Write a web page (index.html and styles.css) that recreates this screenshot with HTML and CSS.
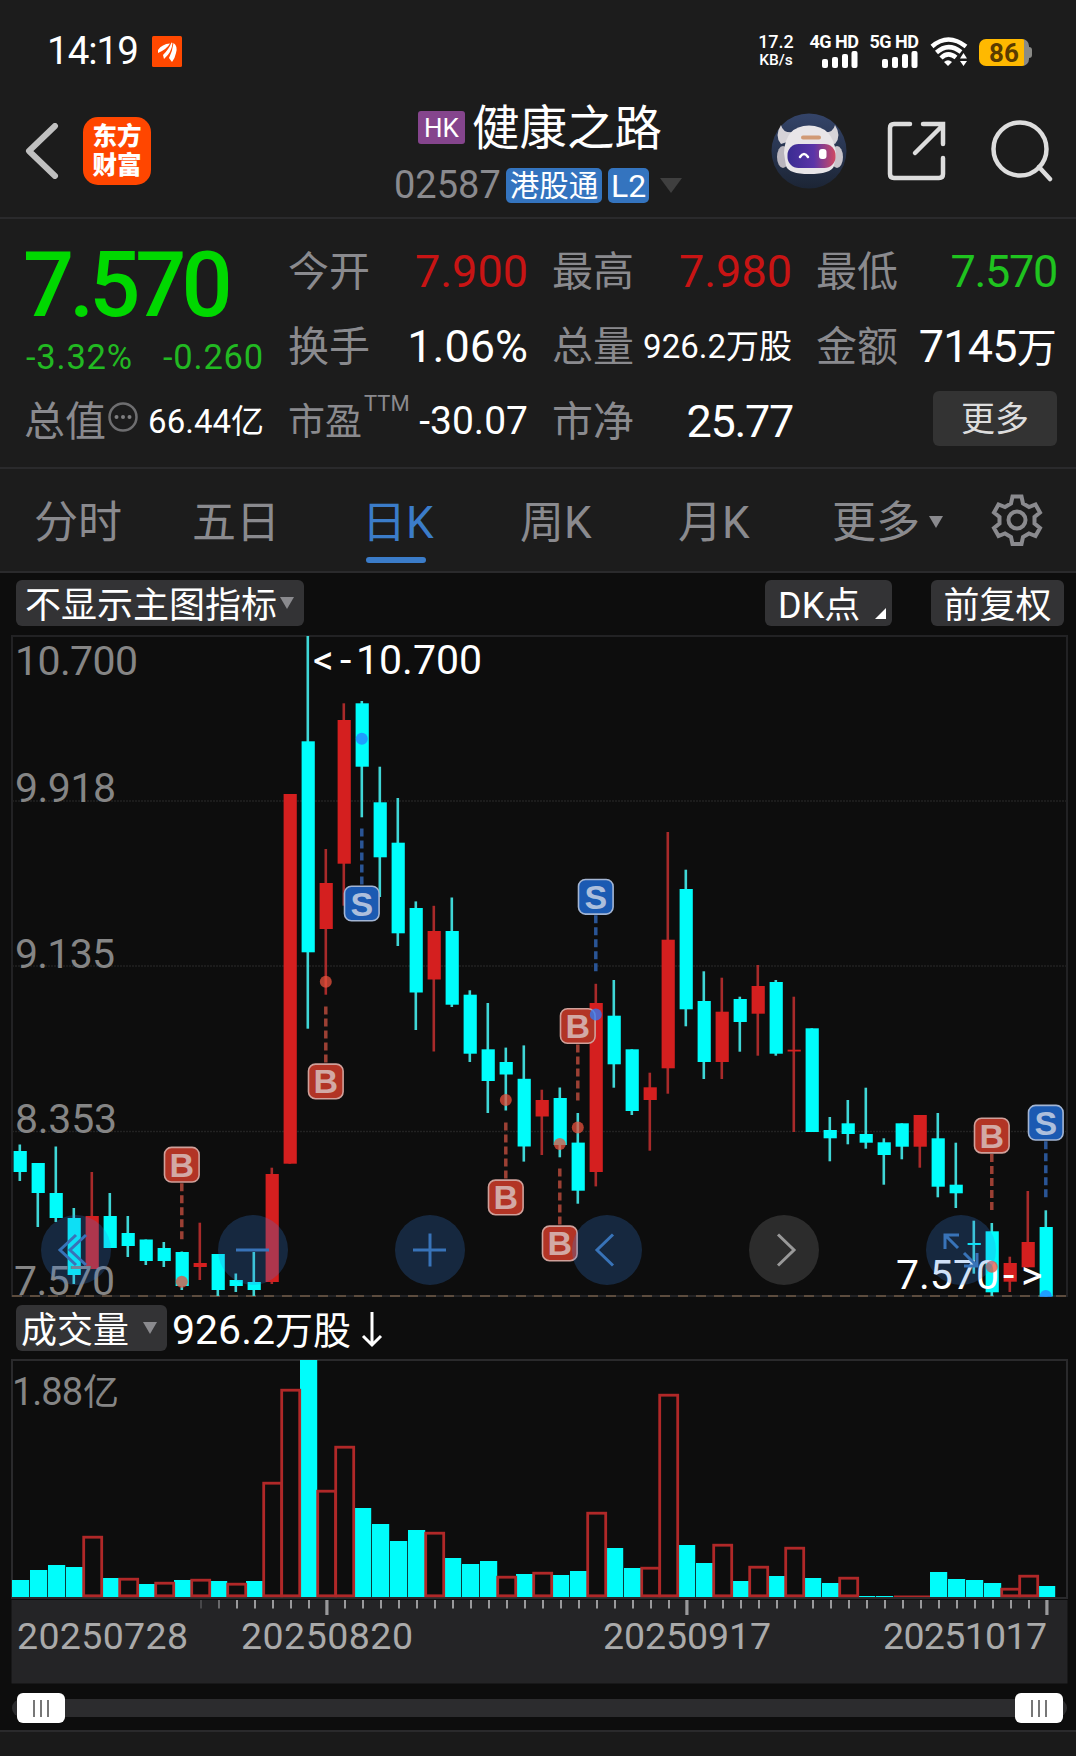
FILE: index.html
```html
<!DOCTYPE html>
<html lang="zh-CN">
<head>
    <meta charset="UTF-8" />
    <title>健康之路 02587</title>
    <link rel="stylesheet" href="styles.css">
</head>
<body>
    <div class="status">
        <span class="time">14:19</span>
        <svg class="notice" width="30" height="31" viewBox="0 0 30 31">
            <rect width="30" height="31" rx="1.5" fill="#ff4800"/>
            <path d="M6 14 Q10 8 18 7.500 Q15 13 6 17Z M11 19 Q17 13 19.500 6.500 L20.500 7 Q20 16 12 23Z M17 22 Q20.500 15 21.500 7 Q26 10 24 17 Q23 22 20 26Z" fill="#fff"/>
        </svg>
        <div class="status-right">
            <div class="speed"><b>17.2</b><i>KB/s</i></div>
            <div class="net">
                <span>4G HD</span>
                <svg width="36" height="17" viewBox="0 0 36 17" fill="#fff"><rect x="0" y="8" width="6" height="9" rx="2"/><rect x="10" y="6" width="6" height="11" rx="2"/><rect x="20" y="3" width="6" height="14" rx="2"/><rect x="29.500" y="0" width="6" height="17" rx="2"/></svg>
            </div>
            <div class="net">
                <span>5G HD</span>
                <svg width="36" height="17" viewBox="0 0 36 17" fill="#fff"><rect x="0" y="8" width="6" height="9" rx="2"/><rect x="10" y="6" width="6" height="11" rx="2"/><rect x="20" y="3" width="6" height="14" rx="2"/><rect x="29.500" y="0" width="6" height="17" rx="2"/></svg>
            </div>
            <svg class="wifi" width="38" height="30" viewBox="0 0 38 30">
                <g fill="none" stroke="#fff" stroke-width="4.500">
                    <path d="M2 9.500 Q18 -4.500 36 9.500"/>
                    <path d="M6.500 15.500 Q18 5 31 15"/>
                    <path d="M11 21 Q18 14 26 20.500"/>
                </g>
                <path d="M14 25 Q18 21.500 22 25 L18 29Z" fill="#fff"/>
                <path d="M30 21.500 L33.500 16 L37 21.500Z M30 24 L33.500 29 L37 24Z" fill="#fff"/>
            </svg>
            <div class="battery">86</div>
        </div>
    </div>

    <div class="header">
        <svg class="back" width="34" height="56" viewBox="0 0 34 56"><path d="M30 3 L4 28 L30 53" fill="none" stroke="#c0c0c0" stroke-width="6" stroke-linecap="round" stroke-linejoin="round"/></svg>
        <div class="logo">东方<br>财富</div>
        <div class="name">
            <div class="name-top"><span class="hk">HK</span><h1>健康之路</h1></div>
            <div class="name-sub"><span class="code">02587</span><span class="tag">港股通</span><span class="tag tag-l2">L2</span><em class="tri"></em></div>
        </div>
        <svg class="robot" width="76" height="78" viewBox="0 0 76 78">
            <defs>
                <linearGradient id="face"><stop offset="0" stop-color="#3a2c92"/><stop offset=".55" stop-color="#5b35a8"/><stop offset="1" stop-color="#d04a62"/></linearGradient>
                <linearGradient id="disc" x2="0" y2="1"><stop offset="0" stop-color="#344469"/><stop offset="1" stop-color="#1c2535"/></linearGradient>
            </defs>
            <ellipse cx="38" cy="38" rx="37.500" ry="37.500" fill="url(#disc)"/>
            <path d="M10 12 Q3 23 10 31 L22 27 L24 19 Q12 21 10 12Z M64 12 Q71 23 64 31 L52 27 L50 19 Q62 21 64 12Z" fill="#d6d3d8"/>
            <ellipse cx="12" cy="44" rx="6" ry="11" fill="#b9b5bd"/><ellipse cx="66" cy="44" rx="6" ry="11" fill="#c9c5cb"/>
            <path d="M13 40 Q14 13 38 12.500 Q62 13 65 40 L63 53 Q60 61 38 61 Q18 61 15 53Z" fill="#e8e5e8"/>
            <rect x="16.500" y="31" width="48" height="24" rx="11" fill="url(#face)"/>
            <path d="M29 44 Q33 38 37 44" stroke="#fff" stroke-width="2.500" fill="none" stroke-linecap="round"/>
            <rect x="48" y="36" width="7.500" height="10" rx="3" fill="#fff"/>
            <rect x="30" y="22.500" width="20" height="4" rx="2" fill="#d19a76"/>
        </svg>
        <svg class="share" width="60" height="62" viewBox="0 0 60 62"><path d="M23 4 H7 Q3 4 3 8 V54 Q3 58 7 58 H52 Q56 58 56 54 V38 M36 4 H56 V24 M55 6 L28 33" fill="none" stroke="#ddd" stroke-width="4.500" stroke-linecap="round"/></svg>
        <svg class="search" width="62" height="64" viewBox="0 0 62 64"><circle cx="29" cy="30" r="26.500" fill="none" stroke="#ddd" stroke-width="4.500"/><path d="M48 48 L59 60" stroke="#ddd" stroke-width="4.500" stroke-linecap="round"/></svg>
    </div>

    <div class="quote">
        <div class="col col-price">
            <div class="price">7.570</div>
            <div class="change"><span>-3.32%</span><span>-0.260</span></div>
            <div class="item cap"><label>总值</label>
                <svg width="30" height="30" viewBox="0 0 30 30"><circle cx="15" cy="15" r="13.500" fill="none" stroke="#6e6e70" stroke-width="2.500"/><g fill="#7e7e80"><circle cx="8.500" cy="15" r="2"/><circle cx="15" cy="15" r="2"/><circle cx="21.500" cy="15" r="2"/></g></svg>
                <span class="val small">66.44亿</span></div>
        </div>
        <div class="col">
            <div class="item"><label>今开</label><span class="val red">7.900</span></div>
            <div class="item"><label>换手</label><span class="val">1.06%</span></div>
            <div class="item"><label class="pe">市盈<sup>TTM</sup></label><span class="val mid">-30.07</span></div>
        </div>
        <div class="col">
            <div class="item"><label>最高</label><span class="val red">7.980</span></div>
            <div class="item"><label>总量</label><span class="val small">926.2万股</span></div>
            <div class="item"><label>市净</label><span class="val tight">25.77</span></div>
        </div>
        <div class="col">
            <div class="item"><label>最低</label><span class="val green tight">7.570</span></div>
            <div class="item"><label>金额</label><span class="val amount">7145<u>万</u></span></div>
            <div class="item end"><button class="more">更多</button></div>
        </div>
    </div>

    <div class="tabs">
        <span>分时</span>
        <span>五日</span>
        <span class="on">日K</span>
        <span>周K</span>
        <span>月K</span>
        <span>更多<em class="tri"></em></span>
        <svg class="gear" width="54" height="54" viewBox="-27 -27 54 54" fill="none" stroke="#8a8a8e" stroke-width="4">
            <path d="M-4.500 -23.500 H4.500 L6 -16.500 L12 -13 L18.500 -15.500 L23 -7.500 L17.500 -3 V3.500 L23 8 L18.500 16 L12 13.500 L6 17 L4.500 24 H-4.500 L-6 17 L-12 13.500 L-18.500 16 L-23 8 L-17.500 3.500 V-3 L-23 -7.500 L-18.500 -15.500 L-12 -13 L-6 -16.500Z"/>
            <circle r="8.500"/>
        </svg>
    </div>

    <div class="toolbar">
        <span class="pill main"><b>不显示主图指标</b><em class="tri"></em></span>
        <span class="pill dk"><b>DK点</b><em class="corner"></em></span>
        <span class="pill fq"><b>前复权</b></span>
    </div>

    <div class="kline">
        <svg id="kchart" width="1076" height="668" viewBox="0 632 1076 668"></svg>
        <div class="ctrls">
            <span class="ctrl"><svg viewBox="0 0 70 70"><path d="M35 20 L19 35 L35 50 M45 20 L29 35 L45 50"/></svg></span>
            <span class="ctrl"><svg viewBox="0 0 70 70"><path d="M18 35 H51"/></svg></span>
            <span class="ctrl"><svg viewBox="0 0 70 70"><path d="M18 35 H51 M35 18.500 V51.500"/></svg></span>
            <span class="ctrl"><svg viewBox="0 0 70 70"><path d="M41 19.500 L25 35 L41 50.500"/></svg></span>
            <span class="ctrl gray"><svg viewBox="0 0 70 70"><path d="M29 19.500 L45 35 L29 50.500"/></svg></span>
            <span class="ctrl"><svg viewBox="0 0 70 70"><path d="M33 20 H19 V34 M19 20 L32 33 M51 38 V51 H38 M51 51 L38 38"/></svg></span>
        </div>
    </div>

    <div class="volbar">
        <span class="pill vol"><b>成交量</b><em class="tri"></em></span>
        <span class="volnum">926.2<u>万股</u></span>
        <svg width="22" height="38" viewBox="0 0 22 38"><path d="M11 2 V34 M2 26 L11 35 L20 26" fill="none" stroke="#fff" stroke-width="3"/></svg>
    </div>
    <svg id="vchart" width="1076" height="330" viewBox="0 1356 1076 330"></svg>

    <div class="slider">
        <span class="handle"><i></i><i></i><i></i></span>
        <span class="handle"><i></i><i></i><i></i></span>
    </div>
    <div class="footer"></div>

    <script>
        // 每根: 涨跌(1红 0青), 最高, 实体上, 实体下, 最低
        var list = [
            [0,1144.5,1151,1172,1181],[0,1163,1163,1193,1227],[0,1146.5,1193,1218,1222],[0,1208,1218,1275,1284],
            [1,1172,1216,1269,1269],[0,1193,1216,1248,1248],[0,1216,1233,1246,1257],[0,1239.5,1239.5,1261,1265],
            [0,1242,1248,1261,1267],[0,1251.5,1252,1286,1290],[1,1222.7,1263,1267,1280],[0,1254,1254,1290,1296],
            [0,1273.5,1280,1286,1292],[0,1252,1282,1290,1296],[1,1167.7,1174,1282,1284],[1,794,794,1163.7,1163.7],
            [0,636,741.3,952.3,1028.7],[1,849,883,929,994.7],[1,703.3,720,863.7,905.7],[0,701,703.3,766.7,817.3],
            [0,766.7,802.3,857.3,897],[0,798,842.7,933.3,946],[0,901.4,908,992.5,1030],[1,905.8,931,979.5,1051.5],
            [0,897.5,931,1004.7,1007],[0,990.3,994.7,1053.7,1062],[0,1003,1049.3,1081,1113],[0,1047.6,1062,1074.5,1110.5],
            [0,1045.4,1078.8,1146.5,1161.6],[1,1089.7,1100,1116.5,1155],[0,1087.5,1098,1145,1157.3],[0,1113,1142.6,1190.7,1203.7],
            [1,983.8,1003,1172,1186.4],[0,980,1015.7,1064.3,1087.7],[0,1049.3,1049.3,1111,1115],[1,1072.7,1087.3,1100,1150.7],
            [1,832,939.7,1068.3,1093.7],[0,869.7,889,1009.3,1026.3],[0,971.3,1001,1062,1079],[1,977.7,1011.7,1062,1079],
            [0,996.7,999,1022,1051.7],[1,965,986,1013.7,1055.7],[0,980,982,1053.7,1055.7],[1,996.7,1049.7,1051.5,1132],
            [0,1028.3,1028.3,1132,1132],[0,1117,1130,1138.3,1161.3],[0,1100,1123.3,1134,1144.3],[0,1087.7,1134,1142.7,1148.7],
            [0,1138.3,1142.3,1155,1184.7],[0,1123.3,1123.3,1146.7,1159.3],[1,1115,1115,1146.7,1167.7],[0,1113,1138.3,1186.7,1197.3],
            [0,1142.7,1184.7,1193.3,1208],[0,1220.7,1243,1245,1273.7],[0,1223,1231.3,1292.3,1296],[1,1256.7,1263,1281.7,1292],
            [1,1191,1242,1267.3,1267.3],[0,1210.3,1227,1296.5,1296.5]
        ];
        var vols = [17,27,32,30,61,19,19,13,15,17,18,16,14,16,115,208,237,107,151,89,73,56,67,65,39,33,36,21,23,25,22,26,85,49,29,30,203,52,34,53,16,31,21,50,19,14,20,1,1,1,1,25,18,17,14,9,22,11];
        // 成交量里红框的序号
        var volRed = [4,6,8,10,12,14,15,17,18,23,27,29,32,35,36,39,41,43,46,49,50,55,56];
        // 买卖点: 序号, 类型, 圆点y, 标签中心y
        var marks = [
            [9,'B',1281.7,1164.7],[17,'B',981.7,1081.4],[19,'S',738.7,903.5],[27,'B',1100,1197.4],[30,'B',1144,1243.4],
            [31,'B',1127.4,1026],[32,'S',1014.6,896.8],[54,'B',1266.7,1135.6],[57,'S',1296,1122.7]
        ];
        var cyan = '#00fdfb', red = '#d41f1f';

        function text(x, y, w, size, color, s){
            return '<text x="'+x+'" y="'+y+'" textLength="'+w+'" font-size="'+size+'" fill="'+color+'">'+s+'</text>';
        }

        var k = '<rect x="12" y="636" width="1055" height="660" fill="none" stroke="#222224" stroke-width="2"/>';
        [801,966,1131.5].forEach(function(y){
            k += '<path d="M12 '+y+' H1067" stroke="#222" stroke-width="1.500" stroke-dasharray="2 1"/>';
        });
        k += '<path d="M12 1296 H1067" stroke="#5c4c3e" stroke-width="1.800" stroke-dasharray="10 8"/>';
        for(var i=0;i<list.length;i++){
            var c = 19.8 + i*18, d = list[i], color = d[0] ? red : cyan;
            k += '<rect x="'+(c-1.3)+'" y="'+d[1]+'" width="2.6" height="'+(d[4]-d[1])+'" fill="'+(d[0] ? '#a82a2a' : '#3fd6d6')+'"/>';
            k += '<rect x="'+(c-6.2)+'" y="'+d[2]+'" width="13.200" height="'+(d[3]-d[2])+'" fill="'+color+'"/>';
        }
        k += text(15,675,123,41,'#858585','10.700') + text(15,802,101,41,'#858585','9.918') + text(15,968,100,41,'#858585','9.135')
           + text(15,1133,102,41,'#858585','8.353') + text(14,1294.5,101,41,'#858585','7.570');
        k += '<text y="673.500" font-size="41" fill="#fff"><tspan x="313">&lt;</tspan><tspan x="340">-</tspan><tspan x="356">10.700</tspan></text>';
        k += '<text y="1289" font-size="41" fill="#fff"><tspan x="896">7.570</tspan><tspan x="1003">-</tspan><tspan x="1021">&gt;</tspan></text>';
        marks.forEach(function(m){
            var x = 19.8 + m[0]*18, buy = m[1]=='B', y = m[3];
            var up = m[2] < y;
            var y1 = up ? y-75 : y+18.5, y2 = up ? y-18 : y+75;
            k += '<path d="M'+x+' '+y1+' V'+y2+'" stroke="'+(buy ? '#9c4034' : '#2a5596')+'" stroke-width="3.500" stroke-dasharray="8 4"/>';
            k += '<circle cx="'+x+'" cy="'+m[2]+'" r="6" fill="'+(buy ? '#e8503c' : '#2a7dff')+'" fill-opacity=".75" clip-path="url(#box)"/>';
            k += '<rect x="'+(x-17.3)+'" y="'+(y-17.3)+'" width="34.600" height="34.600" rx="7" fill="'+(buy ? '#b23425' : '#1b5ab2')+'" stroke="'+(buy ? '#cfa09a' : '#a3b5d3')+'" stroke-width="1.600"/>';
            k += '<text class="mark" x="'+x+'" y="'+(y+12)+'" fill="'+(buy ? '#d2a9a5' : '#adbfdc')+'">'+m[1]+'</text>';
        });
        k = '<clipPath id="box"><rect x="12" y="636" width="1055" height="661"/></clipPath>' + k;
        document.getElementById('kchart').innerHTML = k;

        var v = '<rect x="12" y="1360" width="1055" height="238" fill="none" stroke="#2a2a2c" stroke-width="2"/>';
        v += '<rect x="11.500" y="1600" width="1056" height="83.500" fill="#242426"/>';
        v += text(12,1404.5,71,38,'#858585','1.88') + text(83,1404.5,36,36,'#858585','亿');
        for(var i=0;i<vols.length;i++){
            var x = 12 + i*18, h = vols[i];
            if(volRed.indexOf(i) < 0){
                v += '<rect x="'+x+'" y="'+(1597-h)+'" width="17.200" height="'+h+'" fill="'+cyan+'"/>';
            }
        }
        volRed.forEach(function(i){
            var x = 12 + i*18, h = vols[i];
            if(h < 3){
                v += '<rect x="'+x+'" y="1595.500" width="18" height="1.500" fill="#b02828"/>';
            } else {
                v += '<rect x="'+(x-0.3)+'" y="'+(1598.2-h)+'" width="18" height="'+(h-2.4)+'" fill="#0d0d0d" stroke="#b02828" stroke-width="2.800"/>';
            }
        });
        for(var i=10;i<58;i++){
            var big = i==17 || i==37 || i==57;
            var o = i==10 ? .3 : i==11 ? .6 : 1;
            v += '<rect x="'+(12+i*18+8-(big ? .7 : 0))+'" y="1600" width="'+(big ? 3.2 : 2)+'" height="'+(big ? 15 : 8.5)+'" fill="#99999b" opacity="'+o+'"/>';
        }
        v += text(17,1649,171,37.5,'#aaa','20250728') + text(241,1649,172,37.5,'#aaa','20250820')
           + text(603,1649,168,37.5,'#aaa','20250917') + text(883,1649,164,37.5,'#aaa','20251017');
        document.getElementById('vchart').innerHTML = v;
    </script>
</body>
</html>
```

FILE: styles.css
```css
*{
    margin: 0;
    padding: 0;
    box-sizing: border-box;
}
body{
    width: 1076px;
    height: 1756px;
    overflow: hidden;
    background: #0d0d0d;
    color: #fff;
    font-family: Roboto,'Noto Sans CJK SC',sans-serif;
    line-height: 1;
}
svg{
    display: block;
    flex: none;
}
i,em{
    font-style: normal;
}
u{
    text-decoration: none;
}
span,label,h1{
    white-space: nowrap;
}
.tri{
    display: inline-block;
    border: 7px solid transparent;
    border-top: 12px solid #8a8a8e;
    border-bottom: 0;
}

/* 状态栏 */
.status{
    height: 102px;
    padding: 0 47px 0 47px;
    background: #1c1c1c;
    display: flex;
    align-items: center;
}
.time{
    font-size: 38.500px;
    letter-spacing: -1px;
    width: 105px;
    padding-top: 1px;
}
.status-right{
    margin-left: auto;
    display: flex;
    align-items: center;
}
.speed{
    width: 38px;
    margin-right: 14px;
    text-align: center;
}
.speed b,.speed i{
    display: block;
    font-weight: 500;
    line-height: 1.150;
}
.speed b{
    font-size: 18px;
}
.speed i{
    font-size: 15.500px;
}
.net{
    width: 49px;
    margin-right: 11px;
    display: flex;
    flex-direction: column;
    align-items: flex-end;
}
.net span{
    font-size: 18px;
    line-height: 16px;
    font-weight: 700;
    letter-spacing: -.5px;
    margin-right: -.5px;
}
.net svg{
    margin-top: 1px;
}
.wifi{
    margin: 2px 11px 0 1px;
}
.battery{
    width: 50px;
    height: 27px;
    margin-top: 2px;
    border-radius: 7px;
    background: linear-gradient(90deg,#ffb900 45px,#8a8a86 45px);
    color: #5a3b00;
    font-size: 26px;
    font-weight: 700;
    line-height: 28px;
    text-align: center;
    position: relative;
}
.battery:after{
    content: "";
    position: absolute;
    right: -3px;
    top: 8px;
    width: 4px;
    height: 11px;
    border-radius: 0 3px 3px 0;
    background: #8a8a86;
}

/* 标题 */
.header{
    height: 117px;
    background: #1c1c1c;
    border-bottom: 2px solid #2a2a2c;
    display: flex;
    align-items: flex-start;
}
.back{
    margin: 21px 0 0 25px;
}
.logo{
    width: 68px;
    height: 68px;
    margin: 15px 0 0 24px;
    border-radius: 15px;
    background: #ff4600;
    font-size: 24.500px;
    line-height: 29px;
    padding-top: 5px;
    text-align: center;
    font-weight: 900;
}
.name{
    width: 300px;
    margin-left: 243px;
}
.name-top,.name-sub{
    display: flex;
    align-items: center;
}
.name-top{
    height: 50px;
    padding-left: 24px;
}
.hk{
    width: 47px;
    height: 33px;
    border-radius: 3px;
    background: #85458d;
    font-size: 26px;
    line-height: 34px;
    text-align: center;
}
h1{
    margin-left: 7px;
    padding-top: 6px;
    font-size: 47.500px;
    font-weight: 400;
}
.name-sub{
    height: 36px;
    margin-top: 15px;
}
.code{
    width: 112px;
    font-size: 38px;
    color: #8a8a8e;
}
.tag{
    height: 35px;
    width: 96px;
    border-radius: 5px;
    background: #3474bf;
    font-size: 29.500px;
    line-height: 36px;
    text-align: center;
}
.tag-l2{
    width: 41px;
    margin-left: 6px;
    font-size: 32px;
}
.name-sub .tri{
    margin-left: 11px;
    border-width: 15px 11px 0;
    border-top-color: #3f3f3f;
}
.robot{
    margin: 11px 0 0 77px;
}
.share{
    margin: 18px 0 0 40px;
}
.search{
    margin: 17px 0 0 44px;
}

/* 行情 */
.quote{
    height: 250px;
    padding: 14px 22px 0 26px;
    background: #1c1c1c;
    border-bottom: 2px solid #2a2a2c;
    display: flex;
    gap: 26px;
}
.col{
    width: 238px;
    flex: none;
}
.item{
    height: 75px;
    display: flex;
    align-items: center;
    justify-content: space-between;
}
.item label{
    margin-left: -2px;
    padding-top: 4px;
    font-size: 41px;
    color: #8a8a8e;
}
.item .pe{
    font-size: 37px;
    position: relative;
}
.pe sup{
    position: absolute;
    left: 76px;
    top: -8px;
    font-size: 22px;
    line-height: 23px;
}
.val{
    padding-top: 2px;
    font-size: 45px;
}
.val u{
    font-size: 40px;
}
.val.tight{
    letter-spacing: -1.300px;
    margin-right: -1px;
}
.val.amount{
    letter-spacing: -.8px;
}
.val.mid{
    font-size: 39px;
}
.val.small{
    font-size: 33px;
}
.red{
    color: #c81414;
}
.green{
    color: #1fc31f;
}
.price{
    height: 104px;
    margin-left: -3px;
    font-size: 90px;
    line-height: 106px;
    font-weight: 500;
    letter-spacing: -5px;
    color: #00d800;
}
.change{
    height: 40px;
    margin-bottom: 6px;
    display: flex;
    align-items: center;
    justify-content: space-between;
    font-size: 34.500px;
    letter-spacing: .8px;
    color: #22b922;
}
.cap svg{
    margin: -8px 8px 0 0;
}
.end{
    justify-content: flex-end;
}
.more{
    width: 124px;
    height: 55px;
    margin-top: -5px;
    margin-right: -1px;
    padding-bottom: 3px;
    border: 0;
    border-radius: 6px;
    background: #333;
    color: #ddd;
    font: 34px Roboto,'Noto Sans CJK SC',sans-serif;
}

/* 周期 */
.tabs{
    height: 104px;
    padding: 0 0 0 34px;
    background: #1c1c1c;
    border-bottom: 2px solid #2a2a2c;
    display: flex;
    align-items: center;
    font-size: 44px;
    color: #8a8a8e;
}
.tabs span{
    width: 158px;
    padding-top: 6px;
}
.tabs span:nth-child(2){
    width: 170px;
}
.tabs span:nth-child(5){
    width: 154px;
}
.tabs .on{
    color: #3b7cc9;
    position: relative;
}
.on:after{
    content: "";
    position: absolute;
    left: 4px;
    bottom: -18px;
    width: 60px;
    height: 6px;
    border-radius: 3px;
    background: #3b7cc9;
}
.tabs .tri{
    margin-left: 9px;
    vertical-align: 10px;
}

.toolbar{
    height: 59px;
    padding: 7px 12px 0 16px;
    display: flex;
    align-items: flex-start;
}
.pill{
    height: 46px;
    border-radius: 6px;
    background: #333335;
    display: flex;
    align-items: center;
    font-size: 36px;
}
.pill b{
    font-weight: 400;
    padding-top: 5px;
}
.pill.main{
    width: 288px;
    padding-left: 9px;
}
.pill .tri{
    margin-left: 3px;
}
.dk{
    width: 127px;
    margin-left: auto;
    padding-left: 13px;
    position: relative;
}
.corner{
    position: absolute;
    right: 6px;
    bottom: 7px;
    border-left: 11px solid transparent;
    border-bottom: 11px solid #fff;
}
.fq{
    width: 133px;
    margin-left: 39px;
    justify-content: center;
}

/* K线 */
.kline{
    height: 668px;
    position: relative;
}
.kline text,#vchart text{
    font-family: Roboto,'Noto Sans CJK SC',sans-serif;
}
.kline .mark{
    font-family: 'Liberation Sans',sans-serif;
    font-size: 34px;
    font-weight: 700;
    text-anchor: middle;
}
.ctrls{
    position: absolute;
    left: 41px;
    right: 80px;
    top: 583px;
    display: flex;
    justify-content: space-between;
}
.ctrl{
    width: 70px;
    height: 70px;
    border-radius: 50%;
    background: rgba(55,130,225,.24);
}
.ctrl path{
    fill: none;
    stroke: #3873b8;
    stroke-width: 3;
}
.ctrl.gray{
    background: rgba(255,255,255,.13);
}
.gray path{
    stroke: #999;
}

/* 成交量 */
.volbar{
    height: 56px;
    padding: 5px 0 0 16px;
    display: flex;
    align-items: flex-start;
}
.vol{
    width: 151px;
    padding-left: 5px;
}
.vol .tri{
    margin-left: 14px;
}
.volnum{
    margin: 5px 0 0 5px;
    font-size: 41px;
}
.volnum u{
    font-size: 38px;
}
.volbar svg{
    margin: 5px 0 0 10px;
}
.slider{
    height: 18px;
    margin: 13px 9px 13px 12px;
    padding: 0 4px 0 5px;
    border-radius: 9px;
    background: #2c2c2e;
    display: flex;
    align-items: center;
    justify-content: space-between;
}
.handle{
    width: 48px;
    height: 30px;
    border-radius: 6px;
    background: #fff;
    display: flex;
    align-items: center;
    justify-content: center;
    gap: 5px;
}
.handle i{
    width: 2px;
    height: 17px;
    background: #777;
}
.footer{
    height: 26px;
    background: #1a1a1a;
    border-top: 2px solid #2a2a2c;
}
```
